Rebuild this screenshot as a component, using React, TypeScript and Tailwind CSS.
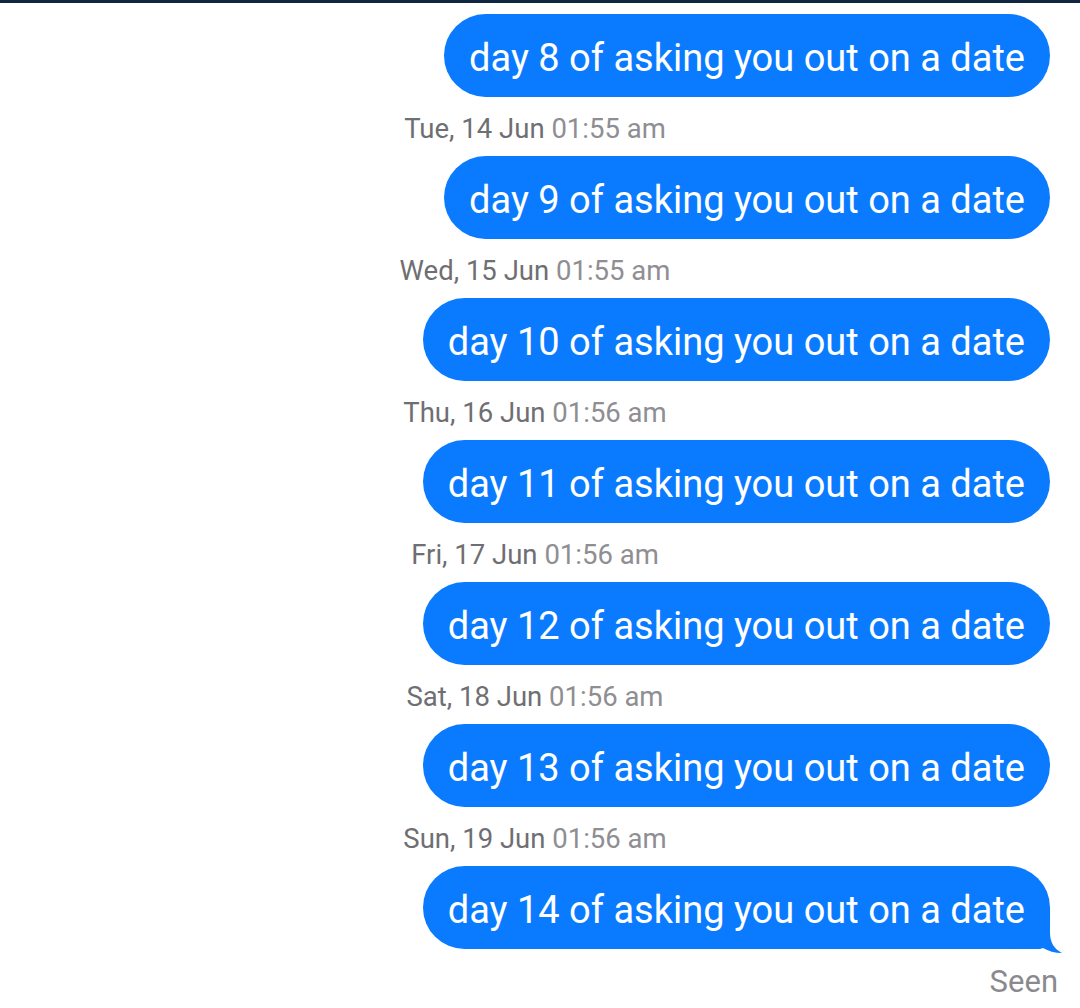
const messages = [
  { day: 8, date: 'Tue, 14 Jun', time: '01:55 am' },
  { day: 9, date: 'Wed, 15 Jun', time: '01:55 am' },
  { day: 10, date: 'Thu, 16 Jun', time: '01:56 am' },
  { day: 11, date: 'Fri, 17 Jun', time: '01:56 am' },
  { day: 12, date: 'Sat, 18 Jun', time: '01:56 am' },
  { day: 13, date: 'Sun, 19 Jun', time: '01:56 am' },
  { day: 14, date: null, time: null },
];

function Bubble({ text, tail }: { text: string; tail?: boolean }) {
  return (
    <div className="relative self-end">
      {tail && (
        <svg
          className="absolute right-[-12px] bottom-[-4px]"
          width="60"
          height="46"
          viewBox="0 0 60 46"
        >
          <path d="M0 0 H48 V26 C48 35 52 42 60 46 C53 46 46 44 41 41 C39 42 37 42 35 42 H0 Z" fill="#0a7bff" />
        </svg>
      )}
      <div className="relative h-[83px] rounded-full bg-[#0a7bff] px-[25px] pt-[5px] flex items-center text-white text-[38px] whitespace-nowrap">
        {text}
      </div>
    </div>
  );
}

export default function App() {
  return (
    <div className="w-full min-h-[1008px] bg-white" style={{ fontFamily: 'Roboto, "Liberation Sans", sans-serif' }}>
      <div className="h-[3px] bg-[#0f2540]" />
      <div className="flex flex-col pr-[30px] pt-[11px]">
        {messages.map((m) => (
          <div key={m.day} className="flex flex-col">
            <Bubble text={`day ${m.day} of asking you out on a date`} tail={!m.date} />
            {m.date && (
              <div className="pl-[20px] mt-[17px] mb-[12px] h-[30px] text-center text-[27.5px] leading-[30px]">
                <span className="text-[#6f6f73]">{m.date}</span>{' '}
                <span className="text-[#8e8e93]">{m.time}</span>
              </div>
            )}
          </div>
        ))}
        <div className="self-end mr-[-8px] mt-[16px] text-[31px] leading-[34px] text-[#8a8a8e]">
          Seen
        </div>
      </div>
    </div>
  );
}
